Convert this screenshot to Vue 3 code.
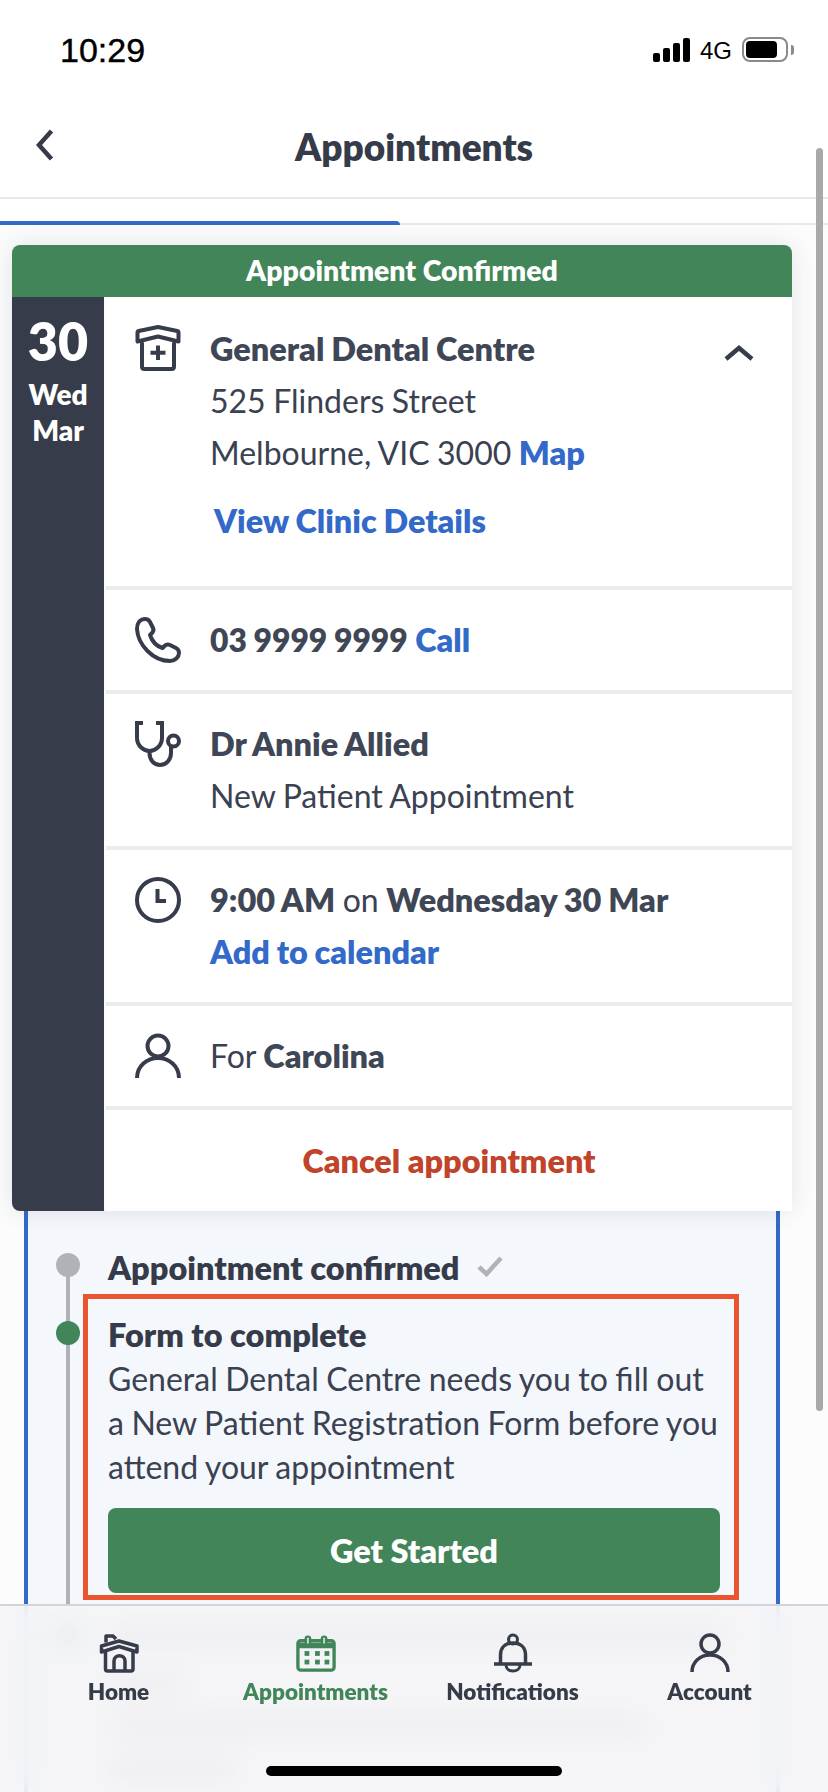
<script setup>
const navItems = [
  { label: 'Home', key: 'home' },
  { label: 'Appointments', key: 'cal', active: true },
  { label: 'Notifications', key: 'bell' },
  { label: 'Account', key: 'user' }
]
const ghostBars = [
  { w: '620px', mt: '0' },
  { w: '80px', mt: '34px' },
  { w: '540px', mt: '28px' },
  { w: '130px', mt: '28px' }
]
</script>

<template>
  <div class="screen">
    <div class="status">
      <span class="time">10:29</span>
      <div class="status-right">
        <div class="signal"><i class="b1"></i><i class="b2"></i><i class="b3"></i><i class="b4"></i></div>
        <span class="net">4G</span>
        <div class="battery"><i></i></div>
        <div class="nub"></div>
      </div>
    </div>

    <header class="head">
      <svg class="back" width="20" height="32" viewBox="0 0 20 32"><path d="M16.5 2 L4 16 L16.5 30" fill="none" stroke="#353b48" stroke-width="4.5"/></svg>
      <h1>Appointments</h1>
    </header>

    <div class="tabs"><div class="tab-active"></div></div>

    <main class="content">
      <section class="card">
        <div class="card-top">Appointment Confirmed</div>
        <div class="card-body">
          <aside class="date">
            <div class="day">30</div>
            <div class="dw">Wed</div>
            <div class="dw">Mar</div>
          </aside>
          <div class="rows">
            <div class="row row-first">
              <svg class="ico ico-a" viewBox="0 0 46 46" fill="none" stroke="#363c49" stroke-width="4" stroke-linejoin="round" stroke-linecap="round">
                <path d="M2.5 16.500 V7.500 Q2.500 6.300 3.700 6 L23 2 L42.300 6 Q43.500 6.300 43.500 7.500 V16.500 L23 11.500 Z"/>
                <path d="M7 18.500 V41.500 Q7 44 9.500 44 H36.500 Q39 44 39 41.500 V18.500"/>
                <path d="M23 20.500 V35 M15.500 27.700 H30.500" stroke-linecap="butt"/>
              </svg>
              <div class="txt">
                <div class="b">General Dental Centre</div>
                <div>525 Flinders Street</div>
                <div>Melbourne, VIC 3000 <span class="link">Map</span></div>
                <div class="link clinic">View Clinic Details</div>
              </div>
              <svg class="chev" width="30" height="16" viewBox="0 0 30 16"><path d="M2 14 L15 3 L28 14" fill="none" stroke="#363c49" stroke-width="4.5"/></svg>
            </div>
            <div class="row">
              <svg class="ico" viewBox="0 0 46 46" fill="none" stroke="#363c49" stroke-width="4" stroke-linejoin="round">
                <path d="M10 2 C5 2 2 6 2 12 C3 28 18 44 35 44 C40 44 44 40 44 36 C44 33.500 43 32 41 31 L35 28 C33 27 31 27.500 29.500 29 L27.500 31 C21 29 17 24 15 18 L17 16 C18.500 14.500 19 13 18 11 L15 5 C14 3 12 2 10 2 Z"/>
              </svg>
              <div class="txt"><span class="b phone">03 9999 9999</span> <span class="link">Call</span></div>
            </div>
            <div class="row">
              <svg class="ico" viewBox="0 0 46 46" fill="none" stroke="#363c49" stroke-width="4">
                <path d="M8 2 H2 V17 C2 25 9 30 14.500 30 C20 30 27 25 27 17 V2 H21"/>
                <path d="M14.500 30 V32 C14.500 39 19 44 25 44 C31 44 36 39 36 32 V26"/>
                <circle cx="38.500" cy="20" r="5.500"/>
              </svg>
              <div class="txt">
                <div class="b">Dr Annie Allied</div>
                <div>New Patient Appointment</div>
              </div>
            </div>
            <div class="row">
              <svg class="ico" viewBox="0 0 46 46" fill="none" stroke="#363c49" stroke-width="4">
                <circle cx="23" cy="23" r="21"/>
                <path d="M22.500 12 V24 H31"/>
              </svg>
              <div class="txt">
                <div><span class="b">9:00 AM</span> on <span class="b">Wednesday 30 Mar</span></div>
                <div class="link">Add to calendar</div>
              </div>
            </div>
            <div class="row">
              <svg class="ico" viewBox="0 0 46 46" fill="none" stroke="#363c49" stroke-width="4">
                <circle cx="23" cy="13" r="10.500"/>
                <path d="M2 45 C2 33 12 25 23 25 C34 25 44 33 44 45"/>
              </svg>
              <div class="txt">For <span class="b">Carolina</span></div>
            </div>
            <div class="cancel">Cancel appointment</div>
          </div>
        </div>
      </section>

      <section class="panel">
        <div class="step step-one">
          <i class="dot grey"></i>
          <div class="step-title">Appointment confirmed</div>
          <svg class="check" width="26" height="22" viewBox="0 0 26 22"><path d="M2 12 L9.500 19 L24 3" fill="none" stroke="#b0b2b6" stroke-width="4.500"/></svg>
        </div>
        <div class="step step-two">
          <i class="dot green"></i>
          <div class="box">
            <div class="step-title tall">Form to complete</div>
            <p>General Dental Centre needs you to fill out<br>a New Patient Registration Form before you<br>attend your appointment</p>
            <div class="btn">Get Started</div>
          </div>
        </div>
        <div class="step ghost">
          <i class="dot green"></i>
          <div class="ghost-lines">
            <div v-for="(bar, i) in ghostBars" :key="i" class="ghost-bar" :style="{ width: bar.w, marginTop: bar.mt }"></div>
          </div>
        </div>
      </section>
    </main>

    <div class="scrollbar"></div>

    <nav class="nav">
      <div v-for="item in navItems" :key="item.key" class="nav-item" :class="{ on: item.active }">
        <svg v-if="item.key === 'home'" class="nav-ico" viewBox="0 0 40 40" fill="none" stroke="#363c49" stroke-width="3.500" stroke-linejoin="round">
          <path d="M2.500 19 V13 L20 8 L38 13 V19 L20 13.500 Z"/>
          <path d="M7 9.500 V3 H14 L17 6"/>
          <path d="M6.500 19 V36 Q6.500 38 8.500 38 H32 Q34 38 34 36 V19"/>
          <path d="M15 37 V28 C15 21 26 21 26 28 V37"/>
        </svg>
        <svg v-else-if="item.key === 'cal'" class="nav-ico" viewBox="0 0 42 40" fill="none" stroke="#418558" stroke-width="3.500">
          <rect x="2" y="7" width="38" height="31" rx="3"/>
          <path d="M2 12 H40" stroke-width="6"/>
          <rect x="9" y="1.500" width="7" height="12" rx="3.500" fill="#418558" stroke="none"/>
          <rect x="26" y="1.500" width="7" height="12" rx="3.500" fill="#418558" stroke="none"/>
          <path d="M12.500 4 V10 M29.500 4 V10" stroke="#f3f4f6" stroke-width="1.500"/>
          <g fill="#418558" stroke="none">
            <rect x="9" y="18" width="5" height="5"/><rect x="20" y="18" width="5" height="5"/><rect x="30" y="18" width="5" height="5"/>
            <rect x="9" y="27" width="5" height="5"/><rect x="20" y="27" width="5" height="5"/><rect x="30" y="27" width="5" height="5"/>
          </g>
        </svg>
        <svg v-else-if="item.key === 'bell'" class="nav-ico" viewBox="0 0 40 40" fill="none" stroke="#363c49" stroke-width="3.500">
          <circle cx="20" cy="6.500" r="4.500" stroke-width="3"/>
          <path d="M7.500 31 V22 C7.500 14 13 10 20 10 C27 10 32.500 14 32.500 22 V31"/>
          <path d="M1 31 H39"/>
          <path d="M13 32 C13 40 27 40 27 32" stroke-width="3"/>
        </svg>
        <svg v-else class="nav-ico" viewBox="0 0 40 40" fill="none" stroke="#363c49" stroke-width="3.500">
          <circle cx="20" cy="11" r="9"/>
          <path d="M2 39 C2 29 10 22 20 22 C30 22 38 29 38 39"/>
        </svg>
        <span>{{ item.label }}</span>
      </div>
      <div class="indicator"></div>
    </nav>
  </div>
</template>

<style>
html, body { margin: 0; padding: 0; background: #fff; }
</style>

<style scoped>
.screen {
  width: 828px;
  height: 1792px;
  position: relative;
  overflow: hidden;
  background: #fff;
  font-family: Lato, "Liberation Sans", sans-serif;
  color: #3a4150;
}
.status {
  height: 100px;
  box-sizing: border-box;
  display: flex;
  justify-content: space-between;
  padding: 30px 34px 0 60px;
  color: #000;
}
.time {
  font-family: "Liberation Sans", sans-serif;
  font-size: 34px;
  line-height: 40px;
  height: 40px;
  -webkit-text-stroke: 0.4px #000;
}
.status-right { display: flex; align-items: flex-start; padding-top: 7px; }
.signal { display: flex; align-items: flex-end; gap: 3px; height: 24px; margin-top: 1px; }
.signal i { width: 7px; background: #000; border-radius: 2px; display: block; }
.b1 { height: 9px; } .b2 { height: 14px; } .b3 { height: 19px; } .b4 { height: 24px; }
.net {
  font-family: "Liberation Sans", sans-serif;
  font-size: 24px;
  line-height: 30px;
  margin: -1px 10px 0 10px;
}
.battery {
  width: 46px;
  height: 25px;
  box-sizing: border-box;
  border: 2px solid #8a8a8a;
  border-radius: 8px;
  padding: 2px;
}
.battery i { display: block; width: 31px; height: 17px; background: #000; border-radius: 4px; }
.nub { width: 3px; height: 10px; margin: 8px 0 0 3px; background: #8a8a8a; border-radius: 0 3px 3px 0; }

.head {
  height: 99px;
  box-sizing: border-box;
  border-bottom: 2px solid #e9e9ea;
  display: flex;
  align-items: center;
  justify-content: center;
  position: relative;
  padding-bottom: 4px;
}
.head h1 { margin: 0; font-size: 37px; line-height: 44px; font-weight: 800; color: #353b48; }
.back { position: absolute; left: 35px; top: 29px; }

.tabs {
  height: 26px;
  box-sizing: border-box;
  border-bottom: 2px solid #e9e9ea;
  display: flex;
  align-items: flex-end;
}
.tab-active { width: 400px; height: 4px; margin-bottom: -2px; background: #3369c9; border-radius: 0 4px 0 0; }

.content { background: #fcfcfd; padding-top: 20px; height: 1567px; box-sizing: border-box; }
.card {
  position: relative;
  z-index: 2;
  width: 780px;
  margin-left: 12px;
  border-radius: 8px;
  box-shadow: 0 0 24px rgba(54, 60, 73, 0.13);
}
.card-top {
  height: 52px;
  background: #418558;
  color: #fff;
  border-radius: 8px 8px 0 0;
  text-align: center;
  font-size: 28.4px;
  font-weight: 800;
  line-height: 50px;
}
.card-body { display: flex; }
.date {
  width: 92px;
  background: #363c49;
  color: #fff;
  text-align: center;
  font-weight: 800;
  border-radius: 0 0 0 8px;
  padding-top: 14px;
  box-sizing: border-box;
}
.day { font-size: 52px; line-height: 60px; margin-bottom: 5px; }
.dw { font-size: 28px; line-height: 36px; }
.rows { flex: 1; margin-left: 2px; background: #fff; }
.row {
  display: flex;
  align-items: flex-start;
  padding: 24px 38px 24px 29px;
  border-bottom: 4px solid #ebecec;
  font-size: 32px;
  line-height: 52px;
  word-spacing: -0.7px;
}
.row-first { padding-top: 26px; padding-bottom: 39px; }
.ico { width: 46px; height: 46px; flex: none; margin-right: 29px; margin-top: 3px; }
.ico-a { margin-top: 2px; }
.txt { flex: 1; white-space: nowrap; }
.b { font-weight: 800; color: #3f4756; font-size: 32.5px; }
.phone { font-size: 31.8px; }
.link { color: #3369c9; font-weight: 800; font-size: 32.4px; }
.clinic { margin: 16px 0 0 4px; }
.chev { margin-top: 22px; flex: none; }
.cancel {
  height: 101px;
  line-height: 101px;
  text-align: center;
  font-size: 32.4px;
  font-weight: 800;
  color: #c0432a;
}

.panel {
  position: relative;
  margin: -2px 48px 0 24px;
  height: 600px;
  box-sizing: border-box;
  border: solid #3369c9;
  border-width: 0 4px;
  background: #f4f7fc;
  padding: 38px 0 0 28px;
}
.panel::before {
  content: "";
  position: absolute;
  left: 38px;
  top: 54px;
  width: 4px;
  height: 341px;
  background: #b0b2b6;
}
.step { display: flex; position: relative; }
.dot { width: 24px; height: 24px; border-radius: 50%; flex: none; display: block; }
.grey { background: #b0b2b6; }
.green { background: #418558; }
.step-one { height: 47px; align-items: flex-start; }
.step-one .dot { margin: 6px 28px 0 0; }
.step-title { font-size: 32.5px; line-height: 41px; font-weight: 800; color: #353b48; }
.check { margin: 8px 0 0 17px; }
.step-two .dot { margin: 27px 3px 0 0; }
.box {
  width: 656px;
  height: 306px;
  box-sizing: border-box;
  border: 5px solid #ea5530;
  padding: 14px 14px 0 20px;
}
.tall { line-height: 44px; }
.box p { margin: 0; font-size: 32px; line-height: 44px; white-space: nowrap; color: #3a4150; word-spacing: -0.7px; }
.btn {
  margin-top: 19px;
  height: 85px;
  line-height: 85px;
  background: #418558;
  border-radius: 8px;
  color: #fff;
  text-align: center;
  font-size: 32.5px;
  font-weight: 800;
}
.ghost { margin-top: 24px; }
.ghost-lines { margin: 6px 0 0 28px; }
.ghost-bar { height: 14px; background: rgba(54, 60, 73, 0.5); border-radius: 4px; }

.scrollbar {
  position: absolute;
  left: 816px;
  top: 148px;
  width: 7px;
  height: 1263px;
  background: #a8a9ab;
  border-radius: 4px;
}

.nav {
  position: absolute;
  left: 0;
  right: 0;
  bottom: 0;
  z-index: 5;
  height: 188px;
  box-sizing: border-box;
  border-top: 2px solid #d3d4d8;
  background: rgba(245, 245, 247, 0.88);
  -webkit-backdrop-filter: blur(14px);
  backdrop-filter: blur(14px);
  display: grid;
  grid-template-columns: repeat(4, 197px);
  padding: 27px 20px 0;
  align-content: start;
}
.nav-item {
  display: flex;
  flex-direction: column;
  align-items: center;
  font-size: 22.5px;
  font-weight: 800;
  line-height: 27px;
  color: #353b48;
}
.nav-item.on { color: #418558; }
.nav-ico { width: 40px; height: 40px; margin-bottom: 5px; }
.indicator {
  position: absolute;
  left: 266px;
  top: 160px;
  width: 296px;
  height: 10px;
  background: #000;
  border-radius: 5px;
}
</style>
